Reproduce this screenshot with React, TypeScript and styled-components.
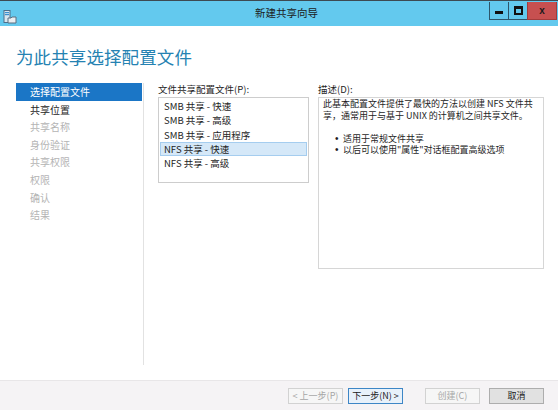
import React from 'react'
import styled, { createGlobalStyle, css } from 'styled-components'

const GlobalStyle = createGlobalStyle`
  html, body {
    margin: 0;
    padding: 0;
    background: #ffffff;
  }
  body {
    font-family: "Noto Sans CJK SC", "Liberation Sans", sans-serif;
    color: #1e1e1e;
  }
`

const Window = styled.div`
  width: 558px;
  height: 412px;
  display: flex;
  flex-direction: column;
  background: #ffffff;
  overflow: hidden;
`

const TitleBar = styled.div`
  height: 25px;
  flex: none;
  display: flex;
  align-items: flex-start;
  background: #63c9ee;
  border-top: 1px solid #3d4a52;
`

const AppIcon = styled.div`
  width: 14px;
  height: 14px;
  margin: 4px 0 0 3px;
`

const Title = styled.div`
  flex: 1;
  text-align: center;
  font-size: 10.5px;
  line-height: 23px;
  color: #1c1c1c;
  padding-left: 66px;
`

const Controls = styled.div`
  display: flex;
  margin-top: 1px;
  margin-right: 1px;
`

const CtrlButton = styled.div<{ $close?: boolean }>`
  height: 18px;
  width: ${p => (p.$close ? '30px' : '20px')};
  display: flex;
  align-items: center;
  justify-content: center;
  box-sizing: border-box;
  border: 1px solid #2d566b;
  border-top: none;
  margin-left: -1px;
  background: ${p => (p.$close ? '#c75050' : '#63c9ee')};
  ${p =>
    p.$close &&
    css`
      border-color: #a23c3c;
    `}
  font-family: "Liberation Sans", sans-serif;
  font-weight: bold;
  font-size: 10px;
  color: #1a1a1a;
`

const MinGlyph = styled.div`
  width: 8px;
  height: 3px;
  background: #111;
  margin-top: 4px;
`

const MaxGlyph = styled.div`
  width: 5px;
  height: 4px;
  border: 2px solid #111;
  border-top-width: 3px;
`

const Body = styled.div`
  flex: 1;
  display: flex;
  flex-direction: column;
  padding: 0 14px 0 16px;
`

const Heading = styled.h1`
  margin: 19px 0 0 0;
  font-weight: normal;
  font-size: 17.5px;
  line-height: 24px;
  color: #2582b2;
  letter-spacing: 0.1px;
`

const Content = styled.div`
  margin-top: 14px;
  height: 282px;
  display: flex;
`

const Nav = styled.div`
  width: 127px;
  flex: none;
  border-right: 1px solid #e2e2e2;
  display: flex;
  flex-direction: column;
`

const NavItem = styled.div<{ $state: 'active' | 'current' | 'disabled' }>`
  height: 17.6px;
  line-height: 17.6px;
  padding-left: 14px;
  font-size: 10px;
  white-space: nowrap;
  color: ${p =>
    p.$state === 'active' ? '#ffffff' : p.$state === 'current' ? '#262626' : '#b4b4b4'};
  background: ${p => (p.$state === 'active' ? '#1b76c6' : 'transparent')};
  margin-right: 1px;
`

const Main = styled.div`
  flex: 1;
  display: flex;
  padding-left: 14px;
  gap: 9px;
`

const Column = styled.div<{ $width?: number }>`
  display: flex;
  flex-direction: column;
  ${p => (p.$width ? `width: ${p.$width}px; flex: none;` : 'flex: 1;')}
`

const FieldLabel = styled.div`
  font-size: 9.5px;
  line-height: 10px;
  margin-top: 1px;
  margin-bottom: 3px;
  color: #1e1e1e;
  white-space: nowrap;
`

const ListBox = styled.div`
  height: 86px;
  box-sizing: border-box;
  border: 1px solid #cdcdcd;
  padding: 1px;
  display: flex;
  flex-direction: column;
`

const ListRow = styled.div<{ $selected?: boolean }>`
  height: 14.3px;
  line-height: 13px;
  box-sizing: border-box;
  padding-left: 3px;
  font-size: 9.5px;
  white-space: nowrap;
  border: 1px solid ${p => (p.$selected ? '#a5cdef' : 'transparent')};
  background: ${p => (p.$selected ? '#d5e8f8' : 'transparent')};
`

const DescBox = styled.div`
  height: 172px;
  box-sizing: border-box;
  border: 1px solid #d6d6d6;
  padding: 0 4px;
  font-size: 9px;
  line-height: 11.6px;
  color: #1e1e1e;
`

const DescLine = styled.div`
  white-space: nowrap;
  min-height: 11.6px;
`

const BulletList = styled.div`
  padding-left: 12px;
  display: flex;
  flex-direction: column;
`

const BulletRow = styled.div`
  display: flex;
  white-space: nowrap;
`

const BulletDot = styled.span`
  width: 8px;
  flex: none;
  font-family: "Liberation Sans", sans-serif;
  font-size: 10px;
`

const Footer = styled.div`
  height: 29px;
  flex: none;
  margin-bottom: 2px;
  background: #f5f3f5;
  border-top: 1px solid #e8e6e8;
  display: flex;
  align-items: center;
  justify-content: flex-end;
  padding-right: 14px;
`

const Button = styled.div<{ $variant: 'disabled' | 'default' | 'normal'; $gap?: number }>`
  width: 55px;
  height: 16px;
  box-sizing: border-box;
  margin-left: ${p => p.$gap ?? 5}px;
  display: flex;
  align-items: center;
  justify-content: center;
  font-size: 9px;
  white-space: nowrap;
  ${p =>
    p.$variant === 'disabled' &&
    css`
      border: 1px solid #d2d2d2;
      background: #f6f6f6;
      color: #a6a6a6;
    `}
  ${p =>
    p.$variant === 'default' &&
    css`
      border: 1px solid #3d86c6;
      background: #e8f1fa;
      color: #1a1a1a;
    `}
  ${p =>
    p.$variant === 'normal' &&
    css`
      border: 1px solid #adadad;
      background: #e1e1e1;
      color: #1a1a1a;
    `}
`

const ServerIcon = () => (
  <svg width="14" height="14" viewBox="0 0 14 14">
    <rect x="1" y="0.5" width="6" height="12" fill="#d8e6f0" stroke="#4d6f8a" strokeWidth="1" />
    <rect x="2" y="2" width="4" height="1.2" fill="#3b8fd0" />
    <rect x="2" y="4" width="4" height="1.2" fill="#3b8fd0" />
    <path d="M5 8 h3 l1 -1 h4 v6 h-8 z" fill="#e9eef2" stroke="#5b6f80" strokeWidth="1" />
  </svg>
)

const navItems: { label: string; state: 'active' | 'current' | 'disabled' }[] = [
  { label: '选择配置文件', state: 'active' },
  { label: '共享位置', state: 'current' },
  { label: '共享名称', state: 'disabled' },
  { label: '身份验证', state: 'disabled' },
  { label: '共享权限', state: 'disabled' },
  { label: '权限', state: 'disabled' },
  { label: '确认', state: 'disabled' },
  { label: '结果', state: 'disabled' },
]

const profiles = [
  'SMB 共享 - 快速',
  'SMB 共享 - 高级',
  'SMB 共享 - 应用程序',
  'NFS 共享 - 快速',
  'NFS 共享 - 高级',
]

const bullets = ['适用于常规文件共享', '以后可以使用"属性"对话框配置高级选项']

export default function App() {
  return (
    <>
      <GlobalStyle />
      <Window>
        <TitleBar>
          <AppIcon>
            <ServerIcon />
          </AppIcon>
          <Title>新建共享向导</Title>
          <Controls>
            <CtrlButton>
              <MinGlyph />
            </CtrlButton>
            <CtrlButton>
              <MaxGlyph />
            </CtrlButton>
            <CtrlButton $close>x</CtrlButton>
          </Controls>
        </TitleBar>
        <Body>
          <Heading>为此共享选择配置文件</Heading>
          <Content>
            <Nav>
              {navItems.map(item => (
                <NavItem key={item.label} $state={item.state}>
                  {item.label}
                </NavItem>
              ))}
            </Nav>
            <Main>
              <Column $width={151}>
                <FieldLabel>文件共享配置文件(P):</FieldLabel>
                <ListBox>
                  {profiles.map((p, i) => (
                    <ListRow key={p} $selected={i === 3}>
                      {p}
                    </ListRow>
                  ))}
                </ListBox>
              </Column>
              <Column>
                <FieldLabel>描述(D):</FieldLabel>
                <DescBox>
                  <DescLine>此基本配置文件提供了最快的方法以创建 NFS 文件共</DescLine>
                  <DescLine>享，通常用于与基于 UNIX 的计算机之间共享文件。</DescLine>
                  <DescLine />
                  <BulletList>
                    {bullets.map(b => (
                      <BulletRow key={b}>
                        <BulletDot>•</BulletDot>
                        {b}
                      </BulletRow>
                    ))}
                  </BulletList>
                </DescBox>
              </Column>
            </Main>
          </Content>
        </Body>
        <Footer>
          <Button $variant="disabled">&lt; 上一步(P)</Button>
          <Button $variant="default">下一步(N) &gt;</Button>
          <Button $variant="disabled" $gap={22}>
            创建(C)
          </Button>
          <Button $variant="normal" $gap={9}>
            取消
          </Button>
        </Footer>
      </Window>
    </>
  )
}
